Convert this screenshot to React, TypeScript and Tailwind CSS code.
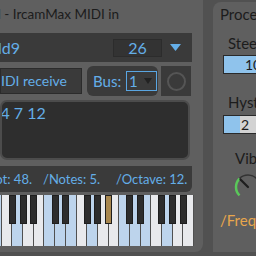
const WHITE_NOTES = ['E', 'F', 'G', 'A', 'B', 'C', 'D'];
const LIT = ['C', 'D', 'E', 'G'];
const HAS_BLACK = ['C', 'D', 'F', 'G', 'A'];

function Keyboard() {
  const count = 19;
  const w = 203 / count;
  const whites = Array.from({ length: count }, (_, i) => WHITE_NOTES[i % 7]);
  const blacks: { left: number; gold: boolean }[] = [];
  whites.forEach((n, i) => {
    if (HAS_BLACK.includes(n) && i < count - 1) {
      blacks.push({ left: (i + 1) * w - 3.5, gold: i === 10 });
    }
  });

  return (
    <div className="relative -ml-[9px] mt-[3px] flex h-[51px] w-[203px]">
      {whites.map((n, i) => (
        <div
          key={i}
          className={
            'h-full flex-1 border-r border-[#505050] ' +
            (LIT.includes(n) ? 'bg-[#bdd4ec]' : 'bg-[#e8e9ec]')
          }
        />
      ))}
      {blacks.map((b, i) => (
        <div
          key={i}
          className={
            'absolute top-0 h-[29px] w-[7px] border border-[#1e1e1e] ' +
            (b.gold ? 'bg-[#a8874f]' : 'bg-[#2d2d2d]')
          }
          style={{ left: b.left }}
        />
      ))}
    </div>
  );
}

function Knob() {
  return (
    <svg width="30" height="30" viewBox="0 0 30 30" className="ml-[20px] mt-[5px]">
      <path d="M6.51 6.51 A12 12 0 0 1 23.49 23.49" fill="none" stroke="#333" strokeWidth="1.5" />
      <path d="M6.51 23.49 A12 12 0 0 1 6.51 6.51" fill="none" stroke="#5ac85a" strokeWidth="2.5" />
      <line x1="15" y1="15" x2="7.5" y2="7.5" stroke="#1e1e1e" strokeWidth="2.2" strokeLinecap="round" />
    </svg>
  );
}

export default function App() {
  return (
    <div
      className="flex h-[256px] w-[256px] overflow-hidden bg-[#515151]"
      style={{ fontFamily: 'Lato, "Open Sans", sans-serif' }}
    >
      {/* left: MIDI in panel */}
      <div className="h-[252px] w-[203px] shrink-0 overflow-hidden rounded-br-[8px] bg-[#5f5f5f]">
        <div className="flex h-[33px] items-start pt-[5px]">
          <div className="flex w-[119px] justify-end overflow-hidden">
            <span className="whitespace-nowrap text-[13.5px] leading-[18px] text-[#1c1c1c]">
              Chord - IrcamMax MIDI in
            </span>
          </div>
        </div>

        <div className="flex h-[29px] w-[192px] items-center bg-[#3a3a3a]">
          <div className="flex w-[20px] justify-end overflow-hidden">
            <span className="whitespace-nowrap text-[16px] leading-[20px] text-[#64aee8]">add9</span>
          </div>
          <div className="ml-[93px] flex h-[18px] w-[49px] items-center justify-center border border-[#2c2c2c] bg-[#333333] text-[16px] leading-[18px] text-[#64aee8]">
            26
          </div>
          <svg width="11" height="7" viewBox="0 0 11 7" className="ml-[8px]">
            <polygon points="0,0 11,0 5.5,7" fill="#64aee8" />
          </svg>
        </div>

        <div className="mt-[4px] flex h-[30px] items-center">
          <div className="flex h-[26px] w-[82px] items-center border border-[#2b2b2b] bg-[#3a3a3a]">
            <div className="flex w-[66px] justify-end overflow-hidden">
              <span className="whitespace-nowrap text-[14px] leading-[18px] text-[#64aee8]">MIDI receive</span>
            </div>
          </div>
          <div className="ml-[5px] flex h-[30px] w-[71px] items-center rounded-[6px] bg-[#3a3a3a] pl-[6px]">
            <span className="w-[27px] text-[15px] leading-[18px] text-[#64aee8]">Bus:</span>
            <div className="ml-[6px] flex h-[20px] w-[31px] items-center border border-[#5aa6e2] pl-[2px]">
              <span className="text-[15px] leading-[18px] text-[#64aee8]">1</span>
              <svg width="8" height="6" viewBox="0 0 8 6" className="ml-auto mr-[4px]">
                <polygon points="0,0 8,0 4,6" fill="#222" />
              </svg>
            </div>
          </div>
          <div className="ml-[3px] flex h-[30px] w-[30px] items-center justify-center bg-[#3a3a3a]">
            <div className="h-[19px] w-[19px] rounded-full border-2 border-[#555555]" />
          </div>
        </div>

        <div className="mt-[4px] h-[60px] w-[190px] overflow-hidden rounded-[7px] border-2 border-[#4c4c4c] bg-[#2e2e2e] pt-[1px]">
          <div className="-ml-[15px] whitespace-nowrap text-[16px] leading-[20px] text-[#64aee8]">0 4 7 12</div>
        </div>

        <div className="mt-[6px] flex h-[26px] w-[192px] items-center rounded-br-[6px] bg-[#3a3a3a] text-[13px] leading-[18px] text-[#64aee8]">
          <div className="flex w-[32px] justify-end overflow-hidden">
            <span className="whitespace-nowrap">/Root: 48.</span>
          </div>
          <span className="ml-[11px] w-[73px] whitespace-nowrap">/Notes: 5.</span>
          <span className="whitespace-nowrap">/Octave: 12.</span>
        </div>

        <Keyboard />
      </div>

      {/* right: processing panel */}
      <div className="ml-[10px] mt-[2px] flex h-[250px] w-[60px] shrink-0 flex-col rounded-tl-[8px] bg-[#5f5f5f] text-[15px] leading-[18px] text-[#1c1c1c]">
        <div className="flex h-[24px] items-center whitespace-nowrap pl-[7px]">Processing</div>
        <div className="ml-[15px] mt-[8px] h-[18px] whitespace-nowrap">Steering</div>
        <div className="ml-[10px] mt-[3px] flex h-[19px] w-[50px] items-center border border-[#2a2a2a] bg-[#8fc3ec] pl-[21px] text-[14px]">
          100
        </div>
        <div className="ml-[15px] mt-[19px] h-[18px] whitespace-nowrap">Hysteresis</div>
        <div className="relative ml-[10px] mt-[4px] flex h-[19px] w-[50px] items-center border border-[#2a2a2a] bg-[#d3d3d3] text-[14px]">
          <div className="h-full w-[16px] bg-[#8fc3ec]" />
          <span className="ml-[1px]">2</span>
        </div>
        <div className="ml-[22px] mt-[15px] h-[18px] whitespace-nowrap">Vibrato</div>
        <Knob />
        <div className="mt-[9px] h-[18px] whitespace-nowrap pl-[7px] text-[#e8a64c]">/Freq:</div>
      </div>
    </div>
  );
}
